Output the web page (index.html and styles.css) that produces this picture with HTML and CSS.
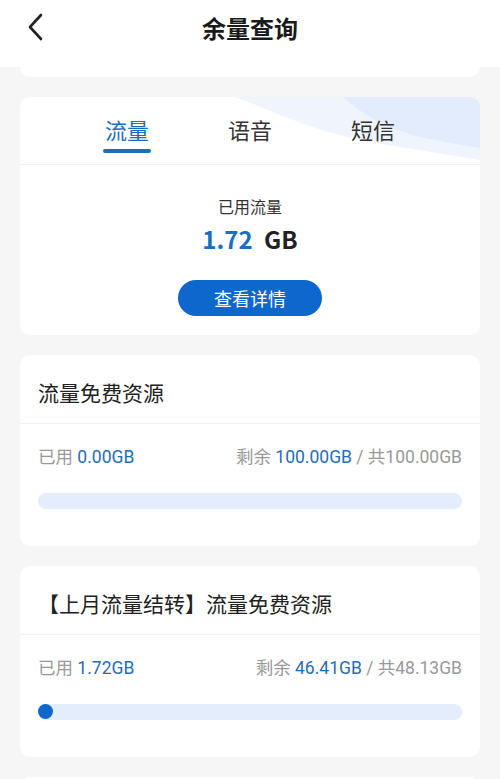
FILE: index.html
```html
<!DOCTYPE html>
<html lang="zh-CN">
<head>
    <meta charset="UTF-8">
    <title>余量查询</title>
    <link rel="stylesheet" href="styles.css">
</head>
<body>

<div class="header">
    <svg class="back" width="20" height="30" viewBox="0 0 20 30">
        <path d="M16 3 L5 15 L16 27" fill="none" stroke="#222" stroke-width="2.6" stroke-linecap="round" stroke-linejoin="round"/>
    </svg>
    <div class="title">余量查询</div>
</div>

<div class="main">
    <div class="stub"></div>

    <div class="card usage-card">
        <svg class="wave" width="245" height="66" viewBox="0 0 245 66" preserveAspectRatio="none">
            <path d="M0 0 C40 15 80 35 140 46 C190 54 220 59 245 63 L245 0 Z" fill="#f0f5fd"/>
            <path d="M108 0 C130 20 160 36 200 43 C220 47 235 49 245 51 L245 0 Z" fill="#e2ecfc"/>
        </svg>
        <div class="tabs">
            <div class="tab active">流量<span class="bar-line"></span></div>
            <div class="tab">语音</div>
            <div class="tab">短信</div>
        </div>
        <div class="usage-body">
            <div class="usage-label">已用流量</div>
            <div class="usage-value"><span class="num">1.72</span> GB</div>
            <button class="detail-btn">查看详情</button>
        </div>
    </div>

    <div class="card res-card">
        <div class="res-title">流量免费资源</div>
        <div class="res-body">
            <div class="res-row">
                <div>已用 <span class="blue">0.00GB</span></div>
                <div>剩余 <span class="blue">100.00GB</span> / 共100.00GB</div>
            </div>
            <div class="progress"></div>
        </div>
    </div>

    <div class="card res-card">
        <div class="res-title">【上月流量结转】流量免费资源</div>
        <div class="res-body">
            <div class="res-row">
                <div>已用 <span class="blue">1.72GB</span></div>
                <div>剩余 <span class="blue">46.41GB</span> / 共48.13GB</div>
            </div>
            <div class="progress"><div class="progress-fill" style="width: 15px;"></div></div>
        </div>
    </div>

    <div class="card next-card"></div>
</div>

</body>
</html>
```

FILE: styles.css
```css
body {
    margin: 0;
    font-family: "Noto Sans CJK SC", "Noto Sans", sans-serif;
    background-color: #f6f6f6;
    color: #222;
    height: 779px;
    overflow: hidden;
}

.header {
    height: 67px;
    background-color: #fff;
    display: flex;
    align-items: center;
    justify-content: center;
    position: relative;
}

.back {
    position: absolute;
    left: 25px;
    top: 12px;
}

.title {
    font-size: 24px;
    font-weight: bold;
    color: #1a1a1a;
    margin-top: -12px;
}

.main {
    padding: 0 20px;
}

.stub {
    height: 10px;
    background-color: #fff;
    border-radius: 0 0 10px 10px;
}

.card {
    background-color: #fff;
    border-radius: 10px;
    margin-top: 20px;
    overflow: hidden;
}

.usage-card {
    position: relative;
    height: 238px;
}

.wave {
    position: absolute;
    top: 0;
    right: 0;
}

.tabs {
    position: relative;
    display: flex;
    justify-content: center;
    height: 67px;
    border-bottom: 1px solid #f2f2f2;
}

.tab {
    width: 123px;
    text-align: center;
    font-size: 22px;
    color: #333;
    padding-top: 16px;
    line-height: 32px;
    position: relative;
}

.tab.active {
    color: #1c6cc0;
}

.bar-line {
    position: absolute;
    left: 37px;
    top: 52px;
    width: 48px;
    height: 4px;
    border-radius: 2px;
    background-color: #1c6cc0;
}

.usage-body {
    display: flex;
    flex-direction: column;
    align-items: center;
}

.usage-label {
    margin-top: 29px;
    font-size: 16px;
    line-height: 24px;
    color: #333;
}

.usage-value {
    font-size: 24px;
    font-weight: bold;
    line-height: 32px;
    margin-top: 5px;
    color: #222;
}

.usage-value .num {
    color: #1a6cc4;
    margin-right: 6px;
}

.detail-btn {
    margin-top: 25px;
    width: 144px;
    height: 36px;
    border: none;
    border-radius: 18px;
    background-color: #0d67cd;
    color: #fff;
    font-family: inherit;
    font-size: 18px;
}

.res-card {
    height: 191px;
}

.res-title {
    height: 68px;
    line-height: 74px;
    padding-left: 18px;
    font-size: 21px;
    color: #222;
    border-bottom: 1px solid #f2f2f2;
}

.res-body {
    padding: 20px 18px 0;
}

.res-row {
    display: flex;
    justify-content: space-between;
    font-family: Roboto, "Noto Sans CJK SC", sans-serif;
    font-size: 17.5px;
    line-height: 26px;
    color: #999;
}

.blue {
    color: #1f6db8;
}

.progress {
    margin-top: 23px;
    height: 16px;
    border-radius: 8px;
    background-color: #e4edfb;
}

.progress-fill {
    height: 15px;
    margin-top: 0.5px;
    border-radius: 8px;
    background-color: #0d67cd;
}

.next-card {
    height: 40px;
}
```
